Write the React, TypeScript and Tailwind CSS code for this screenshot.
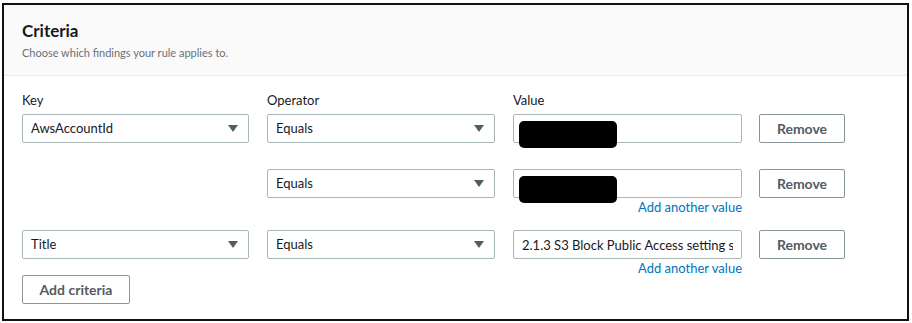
import React from 'react';

function Caret() {
  return (
    <svg width="10" height="7" viewBox="0 0 10 7" className="shrink-0">
      <path d="M0 0 L10 0 L5 7 Z" fill="#545b64" />
    </svg>
  );
}

function Select({ label, width }: { label: string; width: string }) {
  return (
    <div className={`${width} h-[29px] border border-[#aab7b8] rounded-[2px] bg-white flex items-center justify-between pl-[8px] pr-[10px]`}>
      <span className="text-[13px] text-[#16191f]">{label}</span>
      <Caret />
    </div>
  );
}

function ValueInput({ value, redacted }: { value?: string; redacted?: boolean }) {
  return (
    <div className="relative w-[229px] h-[29px]">
      <input
        readOnly
        value={value ?? ''}
        className="w-full h-full border border-[#aab7b8] rounded-[2px] bg-white px-[8px] text-[13px] text-[#16191f] outline-none"
      />
      {redacted && (
        <div className="absolute left-[6px] top-[7px] w-[98px] h-[27px] bg-black rounded-[5px]" />
      )}
    </div>
  );
}

function RemoveButton() {
  return (
    <button className="w-[86px] h-[29px] border border-[#879596] rounded-[2px] bg-white text-[14px] font-bold text-[#545b64]">
      Remove
    </button>
  );
}

function AddValue() {
  return (
    <div className="w-[229px] text-right text-[13px] leading-[18px] text-[#0073bb]">Add another value</div>
  );
}

export default function App() {
  return (
    <div className="w-[912px] h-[323px] bg-white pt-[3px] pl-[2px]" style={{ fontFamily: 'Lato, "Liberation Sans", sans-serif' }}>
      <div className="w-[907px] h-[318px] border-2 border-[#111] bg-white">
        {/* Header */}
        <div className="h-[71px] bg-[#fafafa] border-b border-[#eaeded] pl-[18px] pt-[15px]">
          <h2 className="text-[17px] leading-[22px] font-bold text-[#16191f]">Criteria</h2>
          <p className="text-[11px] leading-[16px] text-[#687078] mt-[3px]">Choose which findings your rule applies to.</p>
        </div>

        {/* Body */}
        <div className="pl-[18px] pt-[15px]">
          <div className="flex gap-[18px] text-[13px] leading-[18px] text-[#16191f]">
            <div className="w-[227px]">Key</div>
            <div className="w-[228px]">Operator</div>
            <div className="w-[229px]">Value</div>
          </div>

          {/* Row 1 */}
          <div className="flex items-start mt-[5px]">
            <Select label="AwsAccountId" width="w-[227px]" />
            <div className="ml-[18px]"><Select label="Equals" width="w-[228px]" /></div>
            <div className="ml-[18px]"><ValueInput redacted /></div>
            <div className="ml-[17px]"><RemoveButton /></div>
          </div>

          {/* Row 2 */}
          <div className="flex items-start mt-[26px]">
            <div className="w-[227px]" />
            <div className="ml-[18px]"><Select label="Equals" width="w-[228px]" /></div>
            <div className="ml-[18px] flex flex-col">
              <ValueInput redacted />
              <AddValue />
            </div>
            <div className="ml-[17px]"><RemoveButton /></div>
          </div>

          {/* Row 3 */}
          <div className="flex items-start mt-[14px]">
            <Select label="Title" width="w-[227px]" />
            <div className="ml-[18px]"><Select label="Equals" width="w-[228px]" /></div>
            <div className="ml-[18px] flex flex-col">
              <ValueInput value="2.1.3 S3 Block Public Access setting should be enabled" />
              <AddValue />
            </div>
            <div className="ml-[17px]"><RemoveButton /></div>
          </div>

          <button className="mt-[-18px] w-[108px] h-[29px] border border-[#879596] rounded-[2px] bg-white text-[14px] font-bold text-[#545b64]">
            Add criteria
          </button>
        </div>
      </div>
    </div>
  );
}
